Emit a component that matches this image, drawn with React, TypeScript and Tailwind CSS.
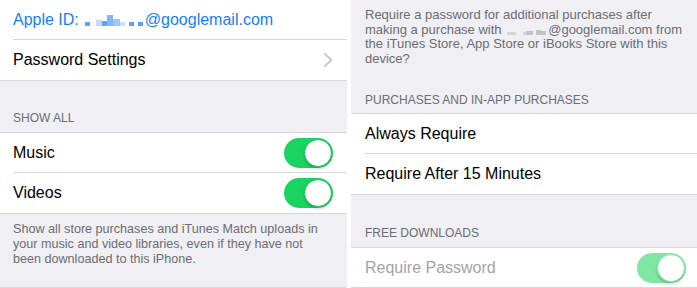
const font = { fontFamily: '"Liberation Sans", Arial, sans-serif' };

function Toggle({ dim = false }: { dim?: boolean }) {
  return (
    <div className={`relative w-[49px] h-[30px] rounded-full ${dim ? "bg-[#7fe6a4]" : "bg-[#1ad462]"}`}>
      <div
        className={`absolute right-[1px] top-[1px] w-[28px] h-[28px] rounded-full bg-white border ${
          dim ? "border-[#8fe8b0]" : "border-[#16c45a]"
        } shadow-[0_2px_3px_rgba(0,0,0,0.18)]`}
      />
    </div>
  );
}

// pixelated blur for the hidden part of the email, drawn as an svg
function Blur({ color, blocks }: { color: string; blocks: [number, number, number][] }) {
  const width = blocks.reduce((s, b) => s + b[0], 0);
  let x = 0;
  return (
    <svg width={width} height={11} className="inline-block align-[-1px] mx-[2px]">
      {blocks.map(([w, h, o], i) => {
        const r = <rect key={i} x={x} y={11 - h} width={w} height={h} fill={color} opacity={o} />;
        x += w;
        return r;
      })}
    </svg>
  );
}

export default function App() {
  return (
    <div className="w-[697px] h-[288px] flex gap-[4px] bg-white overflow-hidden" style={font}>
      <div className="w-[347px] bg-[#efeff4] flex flex-col">
        <div className="bg-white pl-[13px]">
          <div className="h-[40px] flex items-center border-b border-[#d9d9dd]">
            <span className="text-[16px] text-[#157efb] whitespace-nowrap">
              Apple ID:
              <Blur
                color="#4f98f4"
                blocks={[
                  [4, 4, 0],
                  [5, 4, 0.9],
                  [6, 4, 0],
                  [6, 6, 0.35],
                  [5, 5, 0.9],
                  [6, 11, 0.7],
                  [7, 7, 0.55],
                  [5, 4, 0.3],
                  [4, 3, 0],
                  [5, 4, 0.9],
                  [4, 4, 0],
                  [5, 4, 0.9],
                ]}
              />
              @googlemail.com
            </span>
          </div>
        </div>
        <div className="bg-white border-b border-[#d9d9dd]">
          <div className="h-[40px] flex items-center justify-between pl-[13px] pr-[14px]">
            <span className="text-[16px] text-black">Password Settings</span>
            <svg width="9" height="14" viewBox="0 0 9 14" fill="none">
              <polyline points="1,1 7.5,7 1,13" stroke="#c7c7cc" strokeWidth="1.8" strokeLinecap="round" strokeLinejoin="round" />
            </svg>
          </div>
        </div>
        <div className="h-[51px] flex items-end pl-[13px] pb-[7px]">
          <span className="block text-[12px] leading-[14px] text-[#6d6d72]">SHOW ALL</span>
        </div>
        <div className="border-t border-[#d9d9dd]" />
        <div className="bg-white pl-[13px]">
          <div className="h-[40px] flex items-center justify-between pr-[14px] border-b border-[#d9d9dd]">
            <span className="text-[16px] text-black">Music</span>
            <Toggle />
          </div>
        </div>
        <div className="bg-white border-b border-[#d9d9dd] pl-[13px]">
          <div className="h-[40px] flex items-center justify-between pr-[14px]">
            <span className="text-[16px] text-black">Videos</span>
            <Toggle />
          </div>
        </div>
        <p className="pl-[13px] pr-[14px] pt-[8px] text-[12.6px] leading-[15px] text-[#6d6d72]">
          Show all store purchases and iTunes Match uploads in your music and video libraries, even if they have not been downloaded to this iPhone.
        </p>
        <div className="flex-1" />
        <div className="border-b border-[#d9d9dd]" />
      </div>

      <div className="flex-1 bg-[#efeff4] flex flex-col">
        <div className="pl-[14px] pr-[10px] pt-[8px] text-[13px] leading-[14.5px] text-[#6d6d72]">
          <p>Require a password for additional purchases after</p>
          <p>
            making a purchase with{" "}
            <Blur
              color="#c4c4c8"
              blocks={[
                [9, 3, 0.6],
                [7, 3, 0],
                [3, 3, 0.6],
                [7, 4, 1],
                [3, 3, 0],
                [5, 5, 1],
                [5, 4, 1],
              ]}
            />
            @googlemail.com from
          </p>
          <p>the iTunes Store, App Store or iBooks Store with this</p>
          <p>device?</p>
        </div>
        <div className="flex-1" />
        <div className="pl-[14px] pb-[6px]">
          <span className="block text-[12px] leading-[14px] text-[#6d6d72]">PURCHASES AND IN-APP PURCHASES</span>
        </div>
        <div className="border-t border-[#d9d9dd]" />
        <div className="bg-white pl-[14px]">
          <div className="h-[40px] flex items-center border-b border-[#d9d9dd]">
            <span className="text-[16px] text-black">Always Require</span>
          </div>
        </div>
        <div className="bg-white border-b border-[#d9d9dd] pl-[14px]">
          <div className="h-[40px] flex items-center">
            <span className="text-[16px] text-black">Require After 15 Minutes</span>
          </div>
        </div>
        <div className="h-[52px] flex items-end pl-[14px] pb-[7px]">
          <span className="block text-[12px] leading-[14px] text-[#6d6d72]">FREE DOWNLOADS</span>
        </div>
        <div className="border-t border-[#d9d9dd]" />
        <div className="bg-white border-b border-[#d9d9dd] pl-[14px]">
          <div className="h-[39px] flex items-center justify-between pr-[11px]">
            <span className="text-[16px] text-[#a3a3a8]">Require Password</span>
            <Toggle dim />
          </div>
        </div>
      </div>
    </div>
  );
}
